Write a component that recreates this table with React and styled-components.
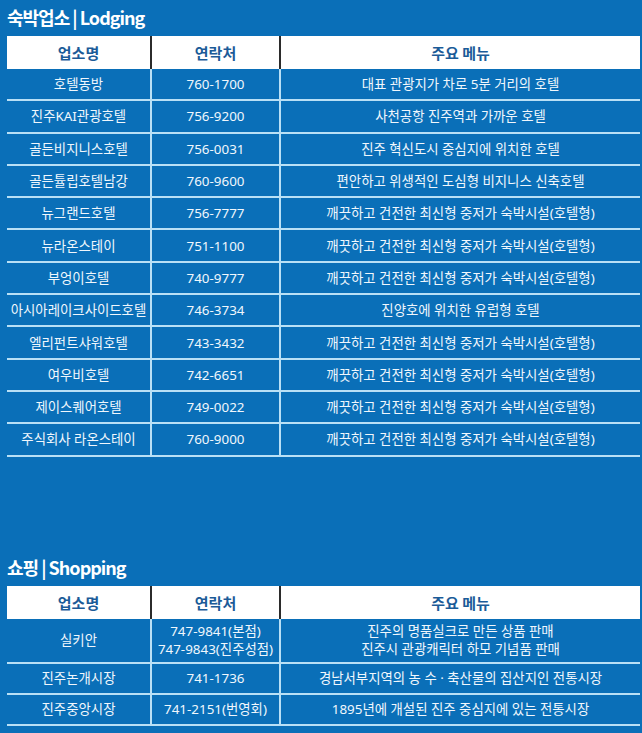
import React from "react";
import styled, { createGlobalStyle } from "styled-components";

const GlobalStyle = createGlobalStyle`
  html, body {
    margin: 0;
    padding: 0;
    background: #0a6fb8;
  }
  body {
    font-family: "Noto Sans", "Noto Sans CJK KR", sans-serif;
  }
`;

const lodging = [
  ["호텔동방", "760-1700", "대표 관광지가 차로 5분 거리의 호텔"],
  ["진주KAI관광호텔", "756-9200", "사천공항 진주역과 가까운 호텔"],
  ["골든비지니스호텔", "756-0031", "진주 혁신도시 중심지에 위치한 호텔"],
  ["골든튤립호텔남강", "760-9600", "편안하고 위생적인 도심형 비지니스 신축호텔"],
  ["뉴그랜드호텔", "756-7777", "깨끗하고 건전한 최신형 중저가 숙박시설(호텔형)"],
  ["뉴라온스테이", "751-1100", "깨끗하고 건전한 최신형 중저가 숙박시설(호텔형)"],
  ["부엉이호텔", "740-9777", "깨끗하고 건전한 최신형 중저가 숙박시설(호텔형)"],
  ["아시아레이크사이드호텔", "746-3734", "진양호에 위치한 유럽형 호텔"],
  ["엘리펀트샤워호텔", "743-3432", "깨끗하고 건전한 최신형 중저가 숙박시설(호텔형)"],
  ["여우비호텔", "742-6651", "깨끗하고 건전한 최신형 중저가 숙박시설(호텔형)"],
  ["제이스퀘어호텔", "749-0022", "깨끗하고 건전한 최신형 중저가 숙박시설(호텔형)"],
  ["주식회사 라온스테이", "760-9000", "깨끗하고 건전한 최신형 중저가 숙박시설(호텔형)"],
];

const shopping = [
  [
    "실키안",
    ["747-9841(본점)", "747-9843(진주성점)"],
    ["진주의 명품실크로 만든 상품 판매", "진주시 관광캐릭터 하모 기념품 판매"],
  ],
  ["진주논개시장", ["741-1736"], ["경남서부지역의 농 수 · 축산물의 집산지인 전통시장"]],
  ["진주중앙시장", ["741-2151(번영회)"], ["1895년에 개설된 진주 중심지에 있는 전통시장"]],
];

const Page = styled.div`
  padding: 0 2px 8px 7px;
`;

const Section = styled.section`
  margin-top: ${(p) => p.$top || 0}px;
`;

const Title = styled.h2`
  margin: 0;
  height: 36px;
  line-height: 34px;
  font-family: "Noto Sans CJK KR", sans-serif;
  font-size: 18px;
  font-weight: 700;
  letter-spacing: -1px;
  color: #ffffff;
`;

const Table = styled.table`
  width: 633px;
  border-collapse: collapse;
  table-layout: fixed;
`;

const Head = styled.th`
  background: #ffffff;
  color: #1b5b98;
  font-family: "Noto Sans CJK KR", sans-serif;
  font-size: 15px;
  font-weight: 700;
  height: 33px;
  padding: 0;
  border-left: 2px solid #2b2b2b;
  &:first-child {
    border-left: none;
  }
`;

const Cell = styled.td`
  color: #f0f7fd;
  font-size: 13.4px;
  line-height: 18px;
  text-align: center;
  padding: 0;
  height: ${(p) => p.$h || 30}px;
  border-left: 2px solid #b9e0f6;
  border-bottom: 2px solid #b9e0f6;
  white-space: nowrap;
  &:first-child {
    border-left: none;
  }
`;

const Cols = () => (
  <colgroup>
    <col style={{ width: 144 }} />
    <col style={{ width: 129 }} />
    <col style={{ width: 360 }} />
  </colgroup>
);

const HeadRow = () => (
  <thead>
    <tr>
      <Head>업소명</Head>
      <Head>연락처</Head>
      <Head>주요 메뉴</Head>
    </tr>
  </thead>
);

const Lines = ({ items }) =>
  items.map((t, i) => <div key={i}>{t}</div>);

export default function App() {
  return (
    <>
      <GlobalStyle />
      <Page>
        <Section>
          <Title>숙박업소 | Lodging</Title>
          <Table>
            <Cols />
            <HeadRow />
            <tbody>
              {lodging.map(([name, tel, desc]) => (
                <tr key={name}>
                  <Cell $h={30.3}>{name}</Cell>
                  <Cell $h={30.3}>{tel}</Cell>
                  <Cell $h={30.3}>{desc}</Cell>
                </tr>
              ))}
            </tbody>
          </Table>
        </Section>
        <Section $top={93}>
          <Title>쇼핑 | Shopping</Title>
          <Table>
            <Cols />
            <HeadRow />
            <tbody>
              {shopping.map(([name, tels, descs]) => {
                const h = tels.length > 1 || descs.length > 1 ? 43 : 29;
                return (
                  <tr key={name}>
                    <Cell $h={h}>{name}</Cell>
                    <Cell $h={h}>
                      <Lines items={tels} />
                    </Cell>
                    <Cell $h={h}>
                      <Lines items={descs} />
                    </Cell>
                  </tr>
                );
              })}
            </tbody>
          </Table>
        </Section>
      </Page>
    </>
  );
}
